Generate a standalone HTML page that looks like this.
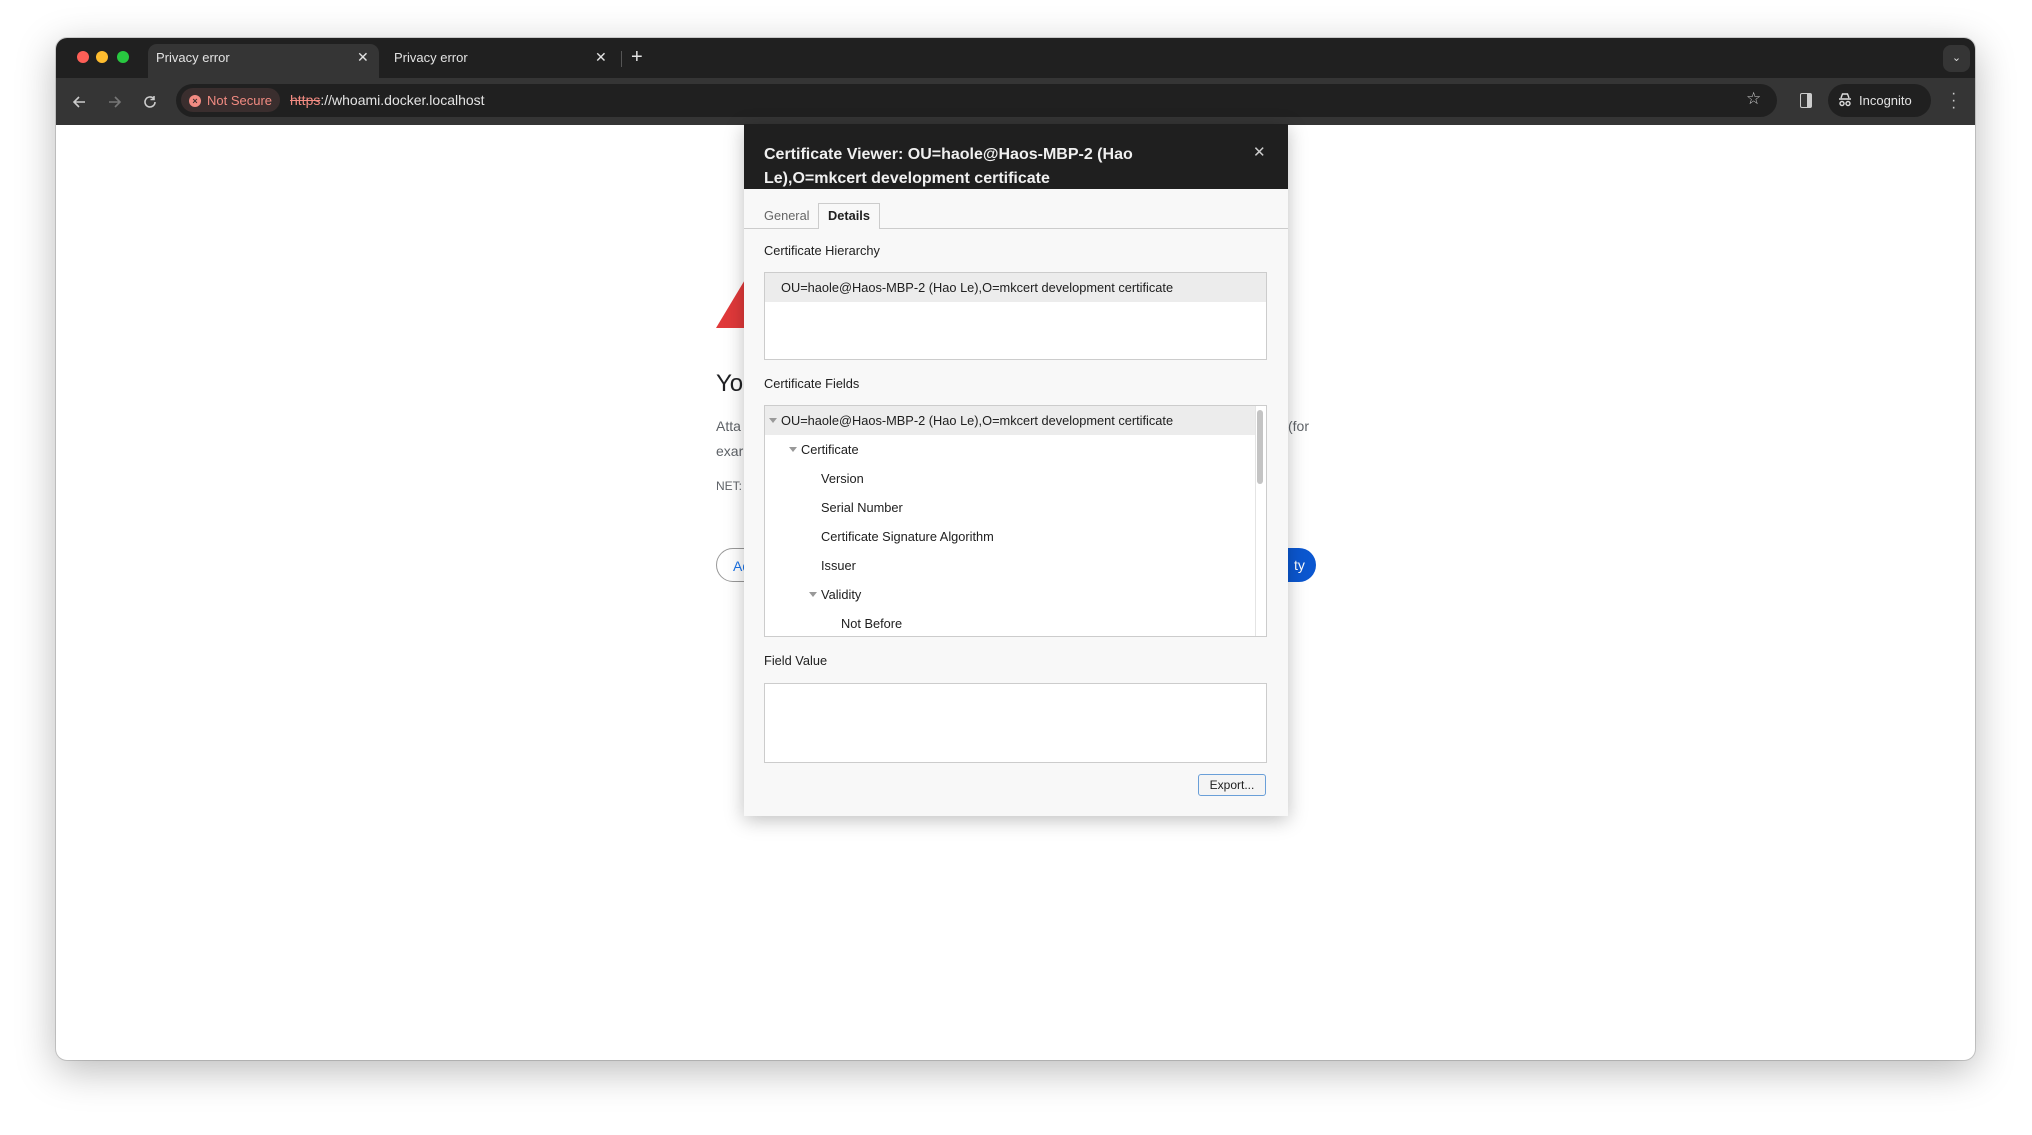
<!DOCTYPE html>
<html><head><meta charset="utf-8"><style>
*{margin:0;padding:0;box-sizing:border-box}
body{width:2032px;height:1135px;background:#fff;font-family:"Liberation Sans",sans-serif;position:relative;overflow:hidden}
.abs{position:absolute}
.win{left:56px;top:38px;width:1919px;height:1022px;border-radius:11px;overflow:hidden;background:#fff;box-shadow:0 10px 40px rgba(0,0,0,.28),0 0 0 1px rgba(0,0,0,.15)}
.tabbar{left:0;top:0;width:100%;height:40px;background:#202020}
.toolbar{left:0;top:40px;width:100%;height:47px;background:#353535}
.dot{width:12px;height:12px;border-radius:50%;top:13px}
.tabt{font-size:13px;color:#e3e3e3}
.dlg{left:744px;top:124px;width:544px;height:692px;background:#f8f8f8;box-shadow:0 4px 18px rgba(0,0,0,.25)}
.t13{font-size:12.8px;color:#202020}
.row{position:absolute;left:0;width:100%;height:29px;line-height:29px;font-size:12.8px;color:#202020}
.tri{position:absolute;top:12px;width:0;height:0;border-left:4px solid transparent;border-right:4px solid transparent;border-top:5px solid #999}
</style></head><body>
<div class="abs win">
 <div class="abs tabbar">
  <div class="abs dot" style="left:21px;background:#fe5f57"></div>
  <div class="abs dot" style="left:40px;background:#febc2e"></div>
  <div class="abs dot" style="left:61px;background:#28c840"></div>
  <div class="abs" style="left:92px;top:6px;width:231px;height:40px;background:#353535;border-radius:9px 9px 0 0"></div>
  <div class="abs tabt" style="left:100px;top:12px">Privacy error</div>
  <div class="abs tabt" style="left:301px;top:11px;font-size:14px">✕</div>
  <div class="abs tabt" style="left:338px;top:12px">Privacy error</div>
  <div class="abs tabt" style="left:539px;top:11px;font-size:14px">✕</div>
  <div class="abs" style="left:565px;top:13px;width:1px;height:16px;background:#555"></div>
  <div class="abs tabt" style="left:575px;top:8px;font-size:20px">+</div>
  <div class="abs" style="left:1887px;top:7px;width:27px;height:27px;border-radius:8px;background:#353535;color:#ddd;font-size:11px;text-align:center;line-height:27px">⌄</div>
 </div>
 <div class="abs toolbar">
  <svg class="abs" style="left:14px;top:15px" width="18" height="18" viewBox="0 0 18 18"><path d="M15 9H4M9 4L4 9l5 5" stroke="#ccc" stroke-width="1.6" fill="none"/></svg>
  <svg class="abs" style="left:50px;top:15px" width="18" height="18" viewBox="0 0 18 18"><path d="M3 9h11M9 4l5 5-5 5" stroke="#777" stroke-width="1.6" fill="none"/></svg>
  <svg class="abs" style="left:85px;top:15px" width="18" height="18" viewBox="0 0 18 18"><path d="M14 9a5 5 0 1 1-1.5-3.6M13 3v3.5H9.5" stroke="#ccc" stroke-width="1.6" fill="none"/></svg>
  <div class="abs" style="left:120px;top:6px;width:1601px;height:33px;border-radius:17px;background:#202020"></div>
  <div class="abs" style="left:125px;top:10px;width:99px;height:24px;border-radius:12px;background:#3a2e2e"></div>
  <div class="abs" style="left:133px;top:17px;width:12px;height:12px;border-radius:50%;background:#f28b82;color:#3a2e2e;font-size:9px;line-height:12px;text-align:center;font-weight:bold">×</div>
  <div class="abs" style="left:151px;top:15px;font-size:13px;color:#f28b82">Not Secure</div>
  <div class="abs" style="left:234px;top:14px;font-size:14px;color:#e3e3e3"><span style="color:#f28b82;text-decoration:line-through">https</span>://whoami.docker.localhost</div>
  <div class="abs" style="left:1690px;top:11px;font-size:17px;color:#ccc">☆</div>
  <div class="abs" style="left:1744px;top:15px;width:12px;height:15px;border:1.6px solid #ccc;border-radius:2px"><div style="position:absolute;right:0;top:0;width:4px;height:100%;background:#ccc"></div></div>
  <div class="abs" style="left:1772px;top:6px;width:103px;height:33px;border-radius:17px;background:#202020"></div>
  <svg class="abs" style="left:1781px;top:14px" width="16" height="16" viewBox="0 0 16 16"><path d="M4 6l1.5-4h5L12 6M2 7h12" stroke="#ddd" stroke-width="1.4" fill="none"/><circle cx="5" cy="11.5" r="2" stroke="#ddd" stroke-width="1.4" fill="none"/><circle cx="11" cy="11.5" r="2" stroke="#ddd" stroke-width="1.4" fill="none"/></svg>
  <div class="abs" style="left:1803px;top:15px;font-size:13px;color:#e3e3e3">Incognito</div>
  <div class="abs" style="left:1895px;top:12px;font-size:16px;color:#ccc;line-height:7px;width:4px;text-align:center">·<br>·<br>·</div>
 </div>
 <svg class="abs" style="left:660px;top:240px" width="80" height="50"><polygon points="0,50 30,0 80,0 80,50" fill="#e0393a"/></svg>
 <div class="abs" style="left:660px;top:332px;font-size:24px;color:#202124">You</div>
 <div class="abs" style="left:660px;top:380px;font-size:14px;color:#5f6368">Atta</div>
 <div class="abs" style="left:1232px;top:380px;font-size:14px;color:#5f6368">(for</div>
 <div class="abs" style="left:660px;top:405px;font-size:14px;color:#5f6368">exar</div>
 <div class="abs" style="left:660px;top:441px;font-size:12px;color:#5f6368">NET:</div>
 <div class="abs" style="left:660px;top:510px;width:100px;height:34px;border:1px solid #999;border-radius:17px;font-size:14px;color:#1a73e8;padding:9px 16px">Ad</div>
 <div class="abs" style="left:1180px;top:510px;width:80px;height:34px;border-radius:17px;background:#0b57d0;color:#fff;font-size:14px;padding:9px 0 0 58px">ty</div>
</div>
<div class="abs dlg">
 <div class="abs" style="left:0;top:0;width:544px;height:65px;background:#1f1f1f"></div>
 <div class="abs" style="left:20px;top:19px;font-size:16px;font-weight:bold;color:#f0f0f0;line-height:24px;width:420px">Certificate Viewer: OU=haole@Haos-MBP-2 (Hao Le),O=mkcert development certificate</div>
 <div class="abs" style="left:509px;top:19px;font-size:15px;color:#ccc">✕</div>
 <div class="abs t13" style="left:20px;top:84px;color:#666">General</div>
 <div class="abs" style="left:74px;top:79px;width:62px;height:26px;border:1px solid #ccc;border-bottom:none;background:#f8f8f8;font-size:12.8px;font-weight:bold;color:#202020;text-align:center;line-height:24px;z-index:2">Details</div>
 <div class="abs" style="left:0;top:104px;width:544px;height:1px;background:#ccc"></div>
 <div class="abs t13" style="left:20px;top:119px">Certificate Hierarchy</div>
 <div class="abs" style="left:20px;top:148px;width:503px;height:88px;border:1px solid #ccc;background:#fff">
  <div class="row" style="top:0;background:#ececec;padding-left:16px">OU=haole@Haos-MBP-2 (Hao Le),O=mkcert development certificate</div>
 </div>
 <div class="abs t13" style="left:20px;top:252px">Certificate Fields</div>
 <div class="abs" style="left:20px;top:281px;width:503px;height:232px;border:1px solid #ccc;background:#fff;overflow:hidden">
  <div class="row" style="top:0;background:#ececec;width:490px"><span class="tri" style="left:4px"></span><span style="position:absolute;left:16px">OU=haole@Haos-MBP-2 (Hao Le),O=mkcert development certificate</span></div>
  <div class="row" style="top:29px"><span class="tri" style="left:24px"></span><span style="position:absolute;left:36px">Certificate</span></div>
  <div class="row" style="top:58px"><span style="position:absolute;left:56px">Version</span></div>
  <div class="row" style="top:87px"><span style="position:absolute;left:56px">Serial Number</span></div>
  <div class="row" style="top:116px"><span style="position:absolute;left:56px">Certificate Signature Algorithm</span></div>
  <div class="row" style="top:145px"><span style="position:absolute;left:56px">Issuer</span></div>
  <div class="row" style="top:174px"><span class="tri" style="left:44px"></span><span style="position:absolute;left:56px">Validity</span></div>
  <div class="row" style="top:203px"><span style="position:absolute;left:76px">Not Before</span></div>
  <div class="abs" style="left:490px;top:0;width:1px;height:100%;background:#e4e4e4"></div>
  <div class="abs" style="left:492px;top:4px;width:6px;height:74px;border-radius:3px;background:#c4c4c4"></div>
 </div>
 <div class="abs t13" style="left:20px;top:529px">Field Value</div>
 <div class="abs" style="left:20px;top:559px;width:503px;height:80px;border:1px solid #ccc;background:#fff"></div>
 <div class="abs" style="left:454px;top:650px;width:68px;height:22px;border:1px solid #6a9fd8;border-radius:3px;background:#f4f4f4;font-size:12px;color:#202020;text-align:center;line-height:20px">Export...</div>
</div>
</body></html>
